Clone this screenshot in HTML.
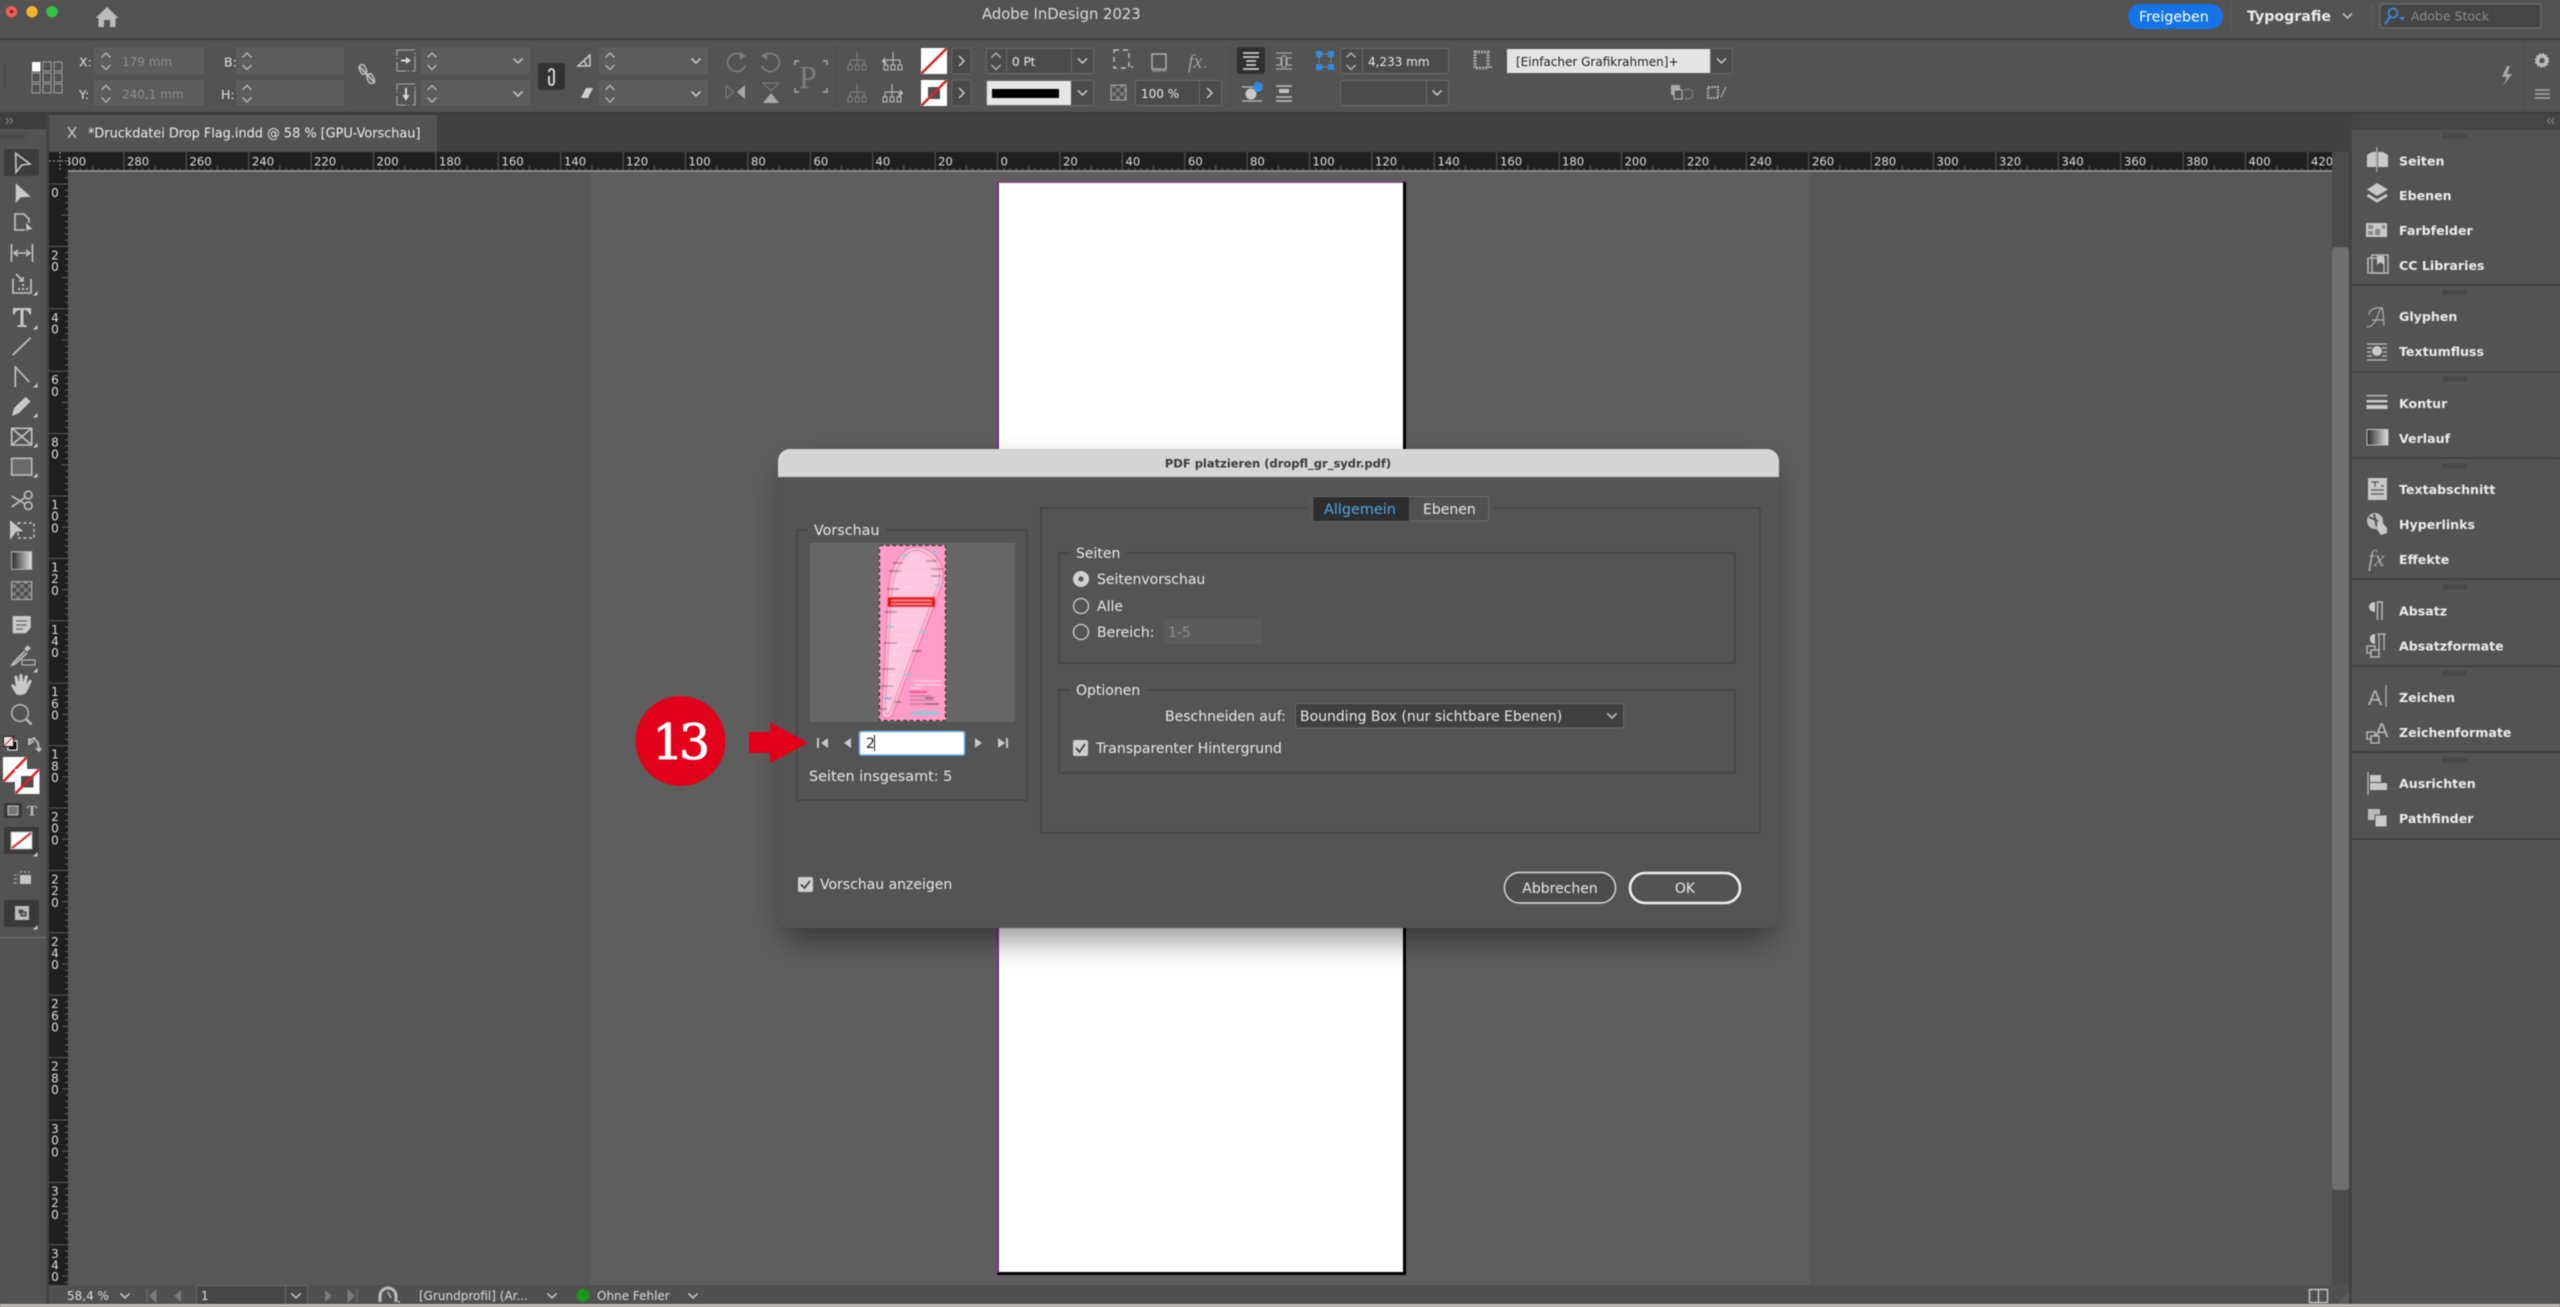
<!DOCTYPE html>
<html lang="de"><head><meta charset="utf-8"><title>Adobe InDesign 2023</title>
<style>
html,body{margin:0;padding:0;background:#535353;overflow:hidden}
svg{display:block;position:absolute;left:0;top:0}
svg.root{filter:blur(.4px)}
text{font-family:"DejaVu Sans","Liberation Sans",sans-serif;white-space:pre}
.t12{font-size:12px;fill:#e8e8e8}
.dis{font-size:12px;fill:#8d8d8d}
.lab{font-size:12.5px;fill:#e0e0e0}
.d{font-size:14px;fill:#e9e9e9}
.pn{font-size:12.6px;font-weight:bold;fill:#ececec}
.rh{font-size:11.6px;fill:#dedede}
.rv{font-size:12px;fill:#dedede;text-anchor:middle}
.st{font-size:12px;fill:#dcdcdc}
.ic{fill:none;stroke:#c4c4c4;stroke-width:1.6}
.icd{fill:none;stroke:#9c9c9c;stroke-width:1.4}
.f{fill:#c9c9c9}
.fd{fill:#8e8e8e}
.fld{fill:#5c5c5c}
.sp{fill:none;stroke:#b5b5b5;stroke-width:1.4}
.gb{fill:none;stroke:#484848;stroke-width:2}
</style></head>
<body>
<svg class="root" width="2560" height="1307" viewBox="0 0 2560 1307" xmlns="http://www.w3.org/2000/svg">
<defs>
<filter id="blur" x="-20%" y="-20%" width="140%" height="140%"><feGaussianBlur stdDeviation="15"/></filter>
<filter id="soft"><feGaussianBlur stdDeviation=".45"/></filter>
<linearGradient id="g1" x1="0" x2="1" y1="0" y2="0"><stop offset="0" stop-color="#2a2a2a"/><stop offset="1" stop-color="#e0e0e0"/></linearGradient>
<pattern id="rh" patternUnits="userSpaceOnUse" x="997" y="152" width="62.4" height="19">
<path d="M.5 0V19" stroke="#5a5a5a" stroke-width="1"/>
<path d="M6.74 16V19M12.98 16V19M19.22 16V19M25.46 16V19M31.7 13V19M37.94 16V19M44.18 16V19M50.42 16V19M56.66 16V19" stroke="#666" stroke-width="1"/>
</pattern>
<pattern id="rv" patternUnits="userSpaceOnUse" x="49" y="183.5" width="19" height="62.4">
<path d="M0 .5H19" stroke="#5a5a5a" stroke-width="1"/>
<path d="M16 6.74H19M16 12.98H19M16 19.22H19M16 25.46H19M13 31.7H19M16 37.94H19M16 44.18H19M16 50.42H19M16 56.66H19" stroke="#666" stroke-width="1"/>
</pattern>
<pattern id="chk" patternUnits="userSpaceOnUse" width="8" height="8"><rect width="8" height="8" fill="#7a7a7a"/><rect width="4" height="4" fill="#4c4c4c"/><rect x="4" y="4" width="4" height="4" fill="#4c4c4c"/></pattern>
<symbol id="spin" overflow="visible"><path class="sp" d="M-4.5 -3L0 -7.5L4.5 -3M-4.5 4.5L0 9L4.5 4.5"/></symbol>
<symbol id="chev" overflow="visible"><path fill="none" stroke="#c0c0c0" stroke-width="1.6" d="M-4.5 -2.5L0 2L4.5 -2.5"/></symbol>
<symbol id="grip" overflow="visible"><path d="M-12 0H12" stroke="#3f3f3f" stroke-width="5" stroke-dasharray="1.3 1.3"/></symbol>
<symbol id="cn" overflow="visible"><path d="M0 0L-4.5 4.5H0Z" fill="#c9c9c9"/></symbol>
</defs>

<!-- window base -->
<rect width="2560" height="1307" fill="#535353"/>
<rect y="38" width="2560" height="2" fill="#3d3d3d"/>
<rect y="112" width="2560" height="2" fill="#3b3b3b"/>
<rect y="114" width="2560" height="38" fill="#414141"/>

<!-- traffic lights -->
<circle cx="11.5" cy="11.7" r="5.7" fill="#ec5f5a"/><circle cx="11.5" cy="11.7" r="1.7" fill="#8c1c1a"/>
<circle cx="32" cy="11.7" r="5.7" fill="#f4b32e"/>
<circle cx="52" cy="11.7" r="5.7" fill="#2fc448"/>
<path d="M107 7L118.5 18H115.5V27H110V20H104V27H98.5V18H95.5Z" fill="#bcbcbc"/>

<text x="982" y="19" style="font-size:14.8px;fill:#dcdcdc">Adobe InDesign 2023</text>

<rect x="2128" y="4" width="95" height="25" rx="12.5" fill="#1473e6"/>
<text x="2139" y="21.5" style="font-size:14.2px;fill:#fff">Freigeben</text>
<rect x="2231" y="4" width="1" height="25" fill="#5e5e5e"/>
<text x="2247" y="21" style="font-size:14.2px;font-weight:bold;fill:#ececec">Typografie</text>
<use href="#chev" x="2347.5" y="16"/>
<rect x="2371" y="4" width="1" height="25" fill="#5e5e5e"/>
<rect x="2380" y="4" width="161" height="24" rx="3" fill="#454545" stroke="#686868" stroke-width="1.5"/>
<circle cx="2393" cy="13" r="4.5" fill="none" stroke="#3f8ee0" stroke-width="1.6"/>
<path d="M2390 17L2385 24" stroke="#3f8ee0" stroke-width="2"/><path d="M2399 17H2405L2402 20.5Z" fill="#3f8ee0"/>
<text x="2411" y="20.5" style="font-size:12.5px;fill:#8a8a8a">Adobe Stock</text>

<!-- control bar left -->
<path d="M5 65V88" stroke="#3f3f3f" stroke-width="2" stroke-dasharray="1.3 1.3"/>
<g fill="none" stroke="#a0a0a0" stroke-width="1">
<rect x="43" y="62" width="8" height="9"/><rect x="54" y="62" width="8" height="9"/>
<rect x="32" y="73" width="8" height="9"/><rect x="43" y="73" width="8" height="9"/><rect x="54" y="73" width="8" height="9"/>
<rect x="32" y="84" width="8" height="9"/><rect x="43" y="84" width="8" height="9"/><rect x="54" y="84" width="8" height="9"/>
</g>
<rect x="32" y="62" width="8.5" height="9.5" fill="#fff"/>

<text class="lab" x="79" y="66.5">X:</text><text class="lab" x="79" y="99">Y:</text>
<rect class="fld" x="94" y="48" width="110" height="26" rx="2"/><rect class="fld" x="94" y="80" width="110" height="26" rx="2"/>
<use href="#spin" x="106" y="60.5"/><use href="#spin" x="106" y="93"/>
<text class="dis" x="122" y="66">179 mm</text><text class="dis" x="122" y="98.5">240,1 mm</text>

<text class="lab" x="224" y="66.5">B:</text><text class="lab" x="221" y="99">H:</text>
<rect class="fld" x="236" y="48" width="108" height="26" rx="2"/><rect class="fld" x="236" y="80" width="108" height="26" rx="2"/>
<use href="#spin" x="247" y="60.5"/><use href="#spin" x="247" y="93"/>

<g fill="none" stroke="#c0c0c0" stroke-width="1.5"><rect x="-3" y="-10" width="6" height="10" rx="3" transform="translate(365 74) rotate(-25)"/><rect x="-3" y="-1" width="6" height="10" rx="3" transform="translate(369 75) rotate(-25)"/><path d="M360 67L375 83" stroke-width="1.8"/></g>

<rect x="397" y="50" width="18" height="21" fill="none" stroke="#a8a8a8" stroke-width="1.1" stroke-dasharray="18 3 1.5 1.5"/>
<path d="M401 60.5H407" stroke="#d8d8d8" stroke-width="2"/><path d="M406 57L411 60.5L406 64Z" fill="#d8d8d8"/>
<rect x="397" y="84" width="18" height="21" fill="none" stroke="#a8a8a8" stroke-width="1.1" stroke-dasharray="18 3 1.5 1.5"/>
<path d="M406 88V96" stroke="#d8d8d8" stroke-width="2"/><path d="M402.500 95L406 101L409.500 95Z" fill="#d8d8d8"/>
<rect class="fld" x="421" y="48" width="109" height="26" rx="2"/><rect class="fld" x="421" y="80" width="109" height="26" rx="2"/>
<use href="#spin" x="432" y="60.5"/><use href="#spin" x="432" y="93"/>
<use href="#chev" x="518" y="61"/><use href="#chev" x="518" y="94"/>

<rect x="538" y="63" width="27" height="27" rx="3" fill="#333"/>
<path d="M549 72C549 68 554 68 554 72V82M554 76V82C554 86 549 86 549 82V76" fill="none" stroke="#e4e4e4" stroke-width="1.8"/>

<path class="ic" d="M578 66L590 55V66ZM584 60L587 66"/>
<path d="M581 98L586 88H593L588 98Z" fill="#d0d0d0"/>
<rect class="fld" x="599" y="48" width="109" height="26" rx="2"/><rect class="fld" x="599" y="80" width="109" height="26" rx="2"/>
<use href="#spin" x="610" y="60.5"/><use href="#spin" x="610" y="93"/>
<use href="#chev" x="696" y="61"/><use href="#chev" x="696" y="94"/>

<!-- rotate / flip -->
<g fill="none" stroke="#7c7c7c" stroke-width="1.8">
<path d="M743 56A9 9 0 1 0 745 66" /><path d="M764 56A9 9 0 1 1 762 66"/>
</g>
<path d="M740 52L746 56L740 60ZM767 52L761 56L767 60Z" fill="#7c7c7c"/>
<path d="M726 86L734 92L726 98Z" fill="none" stroke="#808080"/><path d="M745 85V99L737 92Z" fill="#a8a8a8"/>
<path d="M763 83H779L771 91Z" fill="none" stroke="#808080"/><path d="M763 103H779L771 93Z" fill="#a8a8a8"/>
<text x="799" y="88" style="font-family:'Liberation Serif',serif;font-size:32px;fill:#7e7e7e">P</text>
<path d="M795 65V61H799M823 61H827V65M795 88V92H799M823 92H827V88" fill="none" stroke="#a8a8a8" stroke-width="1.4"/>
<rect x="836" y="46" width="1" height="62" fill="#4d4d4d"/>

<!-- align tree icons -->
<g fill="none" stroke="#808080" stroke-width="1"><path d="M857 52V60M850 60H864M850 60V65M857 60V65M864 60V65M848 65h4v5h-4zM855 65h4v5h-4zM862 65h4v5h-4z"/><path d="M857 84V92M850 92H864M850 92V97M857 92V97M864 92V97M848 97h4v5h-4zM855 97h4v5h-4zM862 97h4v5h-4z"/></g>
<g fill="none" stroke="#c0c0c0" stroke-width="1"><path d="M893 52V60M886 60H900M886 60V65M893 60V65M900 60V65M884 65h4v5h-4zM891 65h4v5h-4zM898 65h4v5h-4z"/><path d="M892 84V92M885 92H899M885 92V97M892 92V97M899 92V97M883 97h4v5h-4zM890 97h4v5h-4zM897 97h4v5h-4z"/></g>
<path d="M882 61L885 57V65ZM903 93L900 89V97Z" fill="#c8c8c8"/>

<!-- swatches -->
<rect x="921" y="48" width="26" height="26" fill="#fff"/><path d="M921.5 73.5L946.5 48.5" stroke="#d9242a" stroke-width="2.5"/>
<rect x="952" y="48" width="19" height="26" rx="2" fill="#4a4a4a" stroke="#636363"/><path d="M959 56L964 61L959 66" fill="none" stroke="#d0d0d0" stroke-width="1.4"/>
<rect x="921" y="80" width="26" height="26" fill="#fff"/><rect x="928" y="87" width="12" height="12" fill="#4e4e4e"/><path d="M921.5 105.5L946.5 80.5" stroke="#d9242a" stroke-width="2.5"/>
<rect x="952" y="80" width="19" height="26" rx="2" fill="#4a4a4a" stroke="#636363"/><path d="M959 88L964 93L959 98" fill="none" stroke="#d0d0d0" stroke-width="1.4"/>

<rect x="986.5" y="48.5" width="107" height="25" rx="2" fill="#4b4b4b" stroke="#686868"/>
<use href="#spin" x="996" y="60.5"/><rect x="1006" y="49" width="1" height="24" fill="#686868"/>
<rect x="1071" y="49" width="1" height="24" fill="#686868"/>
<text class="t12" x="1012" y="66">0 Pt</text><use href="#chev" x="1082.5" y="61"/>
<rect x="986.5" y="80.5" width="107" height="25" rx="2" fill="#4b4b4b" stroke="#686868"/>
<rect x="987" y="81" width="84" height="24" fill="#e6e6e6"/><rect x="992" y="89" width="67" height="9" fill="#000"/>
<use href="#chev" x="1082.5" y="93"/>

<rect x="1114" y="50" width="15" height="18" fill="none" stroke="#c0c0c0" stroke-width="1.4" stroke-dasharray="5 4"/>
<circle cx="1132" cy="67" r="1" fill="#c0c0c0"/>
<rect x="1152" y="54" width="14" height="15" fill="none" stroke="#b8b8b8" stroke-width="1.3"/><rect x="1152" y="69" width="14" height="2.5" fill="#8a8a8a"/>
<text x="1188" y="68" style="font-family:'Liberation Serif',serif;font-style:italic;font-size:20px;fill:#9e9e9e">fx</text><circle cx="1205" cy="67" r="1" fill="#9e9e9e"/>

<rect x="1111" y="85" width="15" height="15" fill="url(#chk)" stroke="#aaa"/>
<rect x="1135.5" y="80.5" width="86" height="25" rx="2" fill="#4b4b4b" stroke="#686868"/><rect x="1199" y="81" width="1" height="24" fill="#686868"/>
<text class="t12" x="1141" y="98">100 %</text><path d="M1207 88L1212 93L1207 98" fill="none" stroke="#d0d0d0" stroke-width="1.4"/>
<rect x="1229" y="46" width="1" height="62" fill="#4d4d4d"/>

<rect x="1237" y="47" width="28" height="27" rx="3" fill="#303030"/>
<path d="M1243 53H1259M1243 57H1259M1246 61H1256M1246 65H1256M1243 69H1259" stroke="#e0e0e0" stroke-width="1.6"/>
<path d="M1276 53H1292M1276 69H1292M1276 58H1281V65H1276M1292 58H1287V65H1292" stroke="#a8a8a8" stroke-width="1.3" fill="none"/><rect x="1282" y="56" width="4" height="11" fill="none" stroke="#a8a8a8"/>
<path d="M1242 87H1262M1242 101H1262" stroke="#b0b0b0" stroke-width="1.4"/><circle cx="1251" cy="94" r="5.5" fill="#c8c8c8"/><circle cx="1258" cy="87" r="5" fill="#2f8ae6"/>
<path d="M1276 86H1292M1276 101H1292M1276 97H1292" stroke="#c0c0c0" stroke-width="1.6"/><rect x="1279" y="89" width="10" height="4" fill="#c0c0c0"/>

<g fill="#2f8ae6"><rect x="1316" y="51" width="6" height="6"/><rect x="1328" y="51" width="6" height="6"/><rect x="1316" y="64" width="6" height="6"/><rect x="1328" y="64" width="6" height="6"/></g>
<path d="M1322 54H1328M1322 67H1328M1319 57V64M1331 57V64" stroke="#a0a0a0" stroke-dasharray="2 1.5"/>
<rect x="1340.5" y="48.5" width="108" height="25" rx="2" fill="#4b4b4b" stroke="#686868"/>
<use href="#spin" x="1351" y="60.5"/><rect x="1362" y="49" width="1" height="24" fill="#686868"/>
<text class="t12" x="1368" y="66">4,233 mm</text>
<rect x="1340.5" y="80.5" width="108" height="25" rx="2" fill="#4b4b4b" stroke="#686868"/><rect x="1426" y="81" width="1" height="24" fill="#686868"/>
<use href="#chev" x="1437" y="93"/>

<rect x="1475" y="52" width="13" height="16" fill="none" stroke="#a8a8a8" stroke-width="3" stroke-dasharray="2 1"/><circle cx="1491" cy="67" r="1" fill="#c0c0c0"/>
<rect x="1507" y="49" width="203" height="24" fill="#e4e4e4"/>
<text x="1516" y="66" style="font-size:12px;fill:#222">[Einfacher Grafikrahmen]+</text>
<rect x="1710.5" y="48.5" width="22" height="25" rx="2" fill="#4b4b4b" stroke="#686868"/><use href="#chev" x="1721.5" y="61"/>
<rect x="1671" y="85" width="9" height="10" fill="#aaa"/><rect x="1674" y="90" width="8" height="9" fill="#555" stroke="#bbb"/><path d="M1685 90A5 5 0 1 1 1685 98" fill="none" stroke="#808080" stroke-width="1.2"/>
<rect x="1708" y="87" width="10" height="11" fill="none" stroke="#b0b0b0" stroke-width="2" stroke-dasharray="2 1"/><path d="M1726 87L1721 97" stroke="#bbb"/>
<path d="M2507 66L2502 77H2507L2503 86L2512 74H2507L2510 66Z" fill="#a8a8a8"/>
<rect x="2523" y="40" width="1" height="72" fill="#4d4d4d"/>
<circle cx="2542" cy="60.5" r="4.5" fill="none" stroke="#bcbcbc" stroke-width="3.5"/><circle cx="2542" cy="60.5" r="6.5" fill="none" stroke="#bcbcbc" stroke-width="1.5" stroke-dasharray="2 1.4"/>
<path d="M2535 90H2550M2535 94H2550M2535 98H2550" stroke="#a8a8a8" stroke-width="1.5"/>

<!-- tab row -->
<rect x="0" y="114" width="46" height="15" fill="#3e3e3e"/>
<path d="M6 118L8.5 121L6 124M10 118L12.5 121L10 124" fill="none" stroke="#8a8a8a"/>
<rect x="49" y="115" width="388" height="37" fill="#535353"/>
<path d="M68 127L76 138M76 127L68 138" stroke="#d0d0d0" stroke-width="1.2"/>
<text x="88" y="137.500" style="font-size:12.85px;fill:#ededed">*Druckdatei Drop Flag.indd @ 58 % [GPU-Vorschau]</text>

<!-- canvas -->
<rect x="49" y="152" width="2303" height="1152" fill="#575757"/>
<rect x="590" y="172" width="1220" height="1113" fill="#5e5e5e"/>

<!-- page -->
<rect x="997" y="182" width="409" height="1093" fill="#000"/>
<rect x="997" y="182" width="406" height="1" fill="#a040a0"/>
<rect x="997" y="182" width="2" height="1091" fill="#7a2a8a"/>
<rect x="999" y="183" width="404" height="1089" fill="#fff"/>

<!-- rulers -->
<rect x="49" y="152" width="2283" height="19" fill="#1f1f1f"/>
<rect x="49" y="152" width="2283" height="19" fill="url(#rh)"/>
<rect x="49" y="170" width="2283" height="2" fill="#8a8a8a"/>
<rect x="49" y="172" width="19" height="1113" fill="#1f1f1f"/>
<rect x="49" y="172" width="19" height="1113" fill="url(#rv)"/>
<rect x="49" y="152" width="19" height="20" fill="#1f1f1f"/>
<path d="M49 161H68M60 152V171" stroke="#9a9a9a" stroke-dasharray="2 2"/>
<svg x="68" y="152" width="2264" height="19" viewBox="68 152 2264 19" style="position:static">
<g class="rh">
<text class="rh" x="64" y="165.5">300</text><text class="rh" x="127" y="165.5">280</text><text class="rh" x="189.5" y="165.5">260</text><text class="rh" x="252" y="165.5">240</text><text class="rh" x="314" y="165.5">220</text><text class="rh" x="376.5" y="165.5">200</text><text class="rh" x="439" y="165.5">180</text><text class="rh" x="501.5" y="165.5">160</text><text class="rh" x="564" y="165.5">140</text><text class="rh" x="626" y="165.5">120</text><text class="rh" x="688.5" y="165.5">100</text>
<text class="rh" x="751" y="165.5">80</text><text class="rh" x="813.5" y="165.5">60</text><text class="rh" x="875.5" y="165.5">40</text><text class="rh" x="938" y="165.5">20</text><text class="rh" x="1000.5" y="165.5">0</text><text class="rh" x="1063" y="165.5">20</text><text class="rh" x="1125.5" y="165.5">40</text><text class="rh" x="1188" y="165.5">60</text><text class="rh" x="1250" y="165.5">80</text>
<text class="rh" x="1312.5" y="165.5">100</text><text class="rh" x="1375" y="165.5">120</text><text class="rh" x="1437.5" y="165.5">140</text><text class="rh" x="1500" y="165.5">160</text><text class="rh" x="1562" y="165.5">180</text><text class="rh" x="1624.5" y="165.5">200</text><text class="rh" x="1687" y="165.5">220</text><text class="rh" x="1749.5" y="165.5">240</text><text class="rh" x="1812" y="165.5">260</text><text class="rh" x="1874" y="165.5">280</text><text class="rh" x="1936.5" y="165.5">300</text><text class="rh" x="1999" y="165.5">320</text><text class="rh" x="2061.5" y="165.5">340</text><text class="rh" x="2124" y="165.5">360</text><text class="rh" x="2186" y="165.5">380</text><text class="rh" x="2248.5" y="165.5">400</text><text class="rh" x="2311" y="165.5">420</text>
</g></svg>
<text class="rv" y="197"><tspan x="55">0</tspan></text>
<text class="rv" y="259.4"><tspan x="55">2</tspan><tspan x="55" dy="11.7">0</tspan></text>
<text class="rv" y="321.8"><tspan x="55">4</tspan><tspan x="55" dy="11.7">0</tspan></text>
<text class="rv" y="384.2"><tspan x="55">6</tspan><tspan x="55" dy="11.7">0</tspan></text>
<text class="rv" y="446.6"><tspan x="55">8</tspan><tspan x="55" dy="11.7">0</tspan></text>
<text class="rv" y="509"><tspan x="55">1</tspan><tspan x="55" dy="11.7">0</tspan><tspan x="55" dy="11.7">0</tspan></text>
<text class="rv" y="571.4"><tspan x="55">1</tspan><tspan x="55" dy="11.7">2</tspan><tspan x="55" dy="11.7">0</tspan></text>
<text class="rv" y="633.8"><tspan x="55">1</tspan><tspan x="55" dy="11.7">4</tspan><tspan x="55" dy="11.7">0</tspan></text>
<text class="rv" y="696.2"><tspan x="55">1</tspan><tspan x="55" dy="11.7">6</tspan><tspan x="55" dy="11.7">0</tspan></text>
<text class="rv" y="758.6"><tspan x="55">1</tspan><tspan x="55" dy="11.7">8</tspan><tspan x="55" dy="11.7">0</tspan></text>
<text class="rv" y="821"><tspan x="55">2</tspan><tspan x="55" dy="11.7">0</tspan><tspan x="55" dy="11.7">0</tspan></text>
<text class="rv" y="883.4"><tspan x="55">2</tspan><tspan x="55" dy="11.7">2</tspan><tspan x="55" dy="11.7">0</tspan></text>
<text class="rv" y="945.8"><tspan x="55">2</tspan><tspan x="55" dy="11.7">4</tspan><tspan x="55" dy="11.7">0</tspan></text>
<text class="rv" y="1008.2"><tspan x="55">2</tspan><tspan x="55" dy="11.7">6</tspan><tspan x="55" dy="11.7">0</tspan></text>
<text class="rv" y="1070.6"><tspan x="55">2</tspan><tspan x="55" dy="11.7">8</tspan><tspan x="55" dy="11.7">0</tspan></text>
<text class="rv" y="1133"><tspan x="55">3</tspan><tspan x="55" dy="11.7">0</tspan><tspan x="55" dy="11.7">0</tspan></text>
<text class="rv" y="1195.4"><tspan x="55">3</tspan><tspan x="55" dy="11.7">2</tspan><tspan x="55" dy="11.7">0</tspan></text>
<text class="rv" y="1257.8"><tspan x="55">3</tspan><tspan x="55" dy="11.7">4</tspan><tspan x="55" dy="11.7">0</tspan></text>

<!-- scrollbar -->
<rect x="2332" y="152" width="20" height="1133" fill="#4b4b4b"/>
<rect x="2332" y="247" width="17" height="943" rx="4" fill="#6f6f6f"/>

<!-- status bar -->
<rect x="46" y="1285" width="2306" height="19" fill="#505050"/>
<text class="st" x="67" y="1300">58,4 %</text><use href="#chev" x="125" y="1296"/>
<path d="M147 1290V1302M156 1290L150 1296L156 1302Z" stroke="#7a7a7a" fill="#7a7a7a"/>
<path d="M181 1290L174 1296L181 1302Z" fill="#7a7a7a"/>
<rect x="196.5" y="1285.5" width="111" height="19" rx="2" fill="#474747" stroke="#6a6a6a"/><rect x="285" y="1286" width="1" height="18" fill="#6a6a6a"/>
<text class="st" x="201" y="1300">1</text><use href="#chev" x="296" y="1296"/>
<path d="M325 1290L332 1296L325 1302Z" fill="#7a7a7a"/><path d="M348 1290L354 1296L348 1302ZM357 1290V1302" stroke="#7a7a7a" fill="#7a7a7a"/>
<path d="M380 1302V1296A8 8 0 0 1 396 1296V1302" fill="none" stroke="#bbb" stroke-width="3"/><path d="M388 1292L391 1298" stroke="#bbb" stroke-width="1.5"/><circle cx="399" cy="1302" r="1" fill="#bbb"/>
<text class="st" x="419" y="1300">[Grundprofil] (Ar...</text><use href="#chev" x="552" y="1296"/>
<circle cx="583" cy="1295.5" r="6.5" fill="#1a961a"/>
<text class="st" x="597" y="1300">Ohne Fehler</text><use href="#chev" x="693" y="1296"/>
<rect x="2309.5" y="1289.5" width="18" height="13" fill="none" stroke="#c8c8c8" stroke-width="1.4"/><path d="M2318.5 1289V1303" stroke="#c8c8c8" stroke-width="1.4"/>
<path d="M2338 1303L2349 1292V1303Z" fill="#5c5c5c"/>
<rect y="1304" width="2560" height="3" fill="#c8bdbd"/>

<!-- left toolbar -->
<rect x="0" y="129" width="46" height="1175" fill="#535353"/>
<rect x="46" y="114" width="3" height="1190" fill="#444"/>
<use href="#grip" x="13" y="136"/>
<rect x="4" y="149" width="35" height="27" rx="2" fill="#3d3d3d"/>
<path class="ic" d="M15.7 153.3L30 164L21.7 165L16 172.3Z"/>
<path class="f" d="M15.7 183.3L30.7 196.7L20.7 197.3L15.7 203.3Z"/>
<path class="ic" d="M25 230H15V214H24L29 219V223"/><path class="f" d="M26 223L32.5 229L28.3 229.5L26.7 232Z"/>
<path class="ic" d="M11.5 244V262M32.5 244V262M14 253H30M18 250L14 253L18 256M26 250L30 253L26 256" stroke-width="2"/>
<path class="ic" d="M13 279V293H31V279" stroke-width="2"/><path class="ic" d="M16 274L23 281M23 277V281H19"/><path d="M18 288h2v2h-2zM22 288h2v2h-2zM26 288h2v2h-2zM22 284h2v2h-2z" fill="#c4c4c4"/><use href="#cn" x="37.5" y="291"/>
<path class="f" d="M13 308H31V314.500H29.500C28.500 311 27 310 23.500 310V325H26.500V327H17.500V325H20.500V310C17 310 15.500 311 14.500 314.500H13Z"/><use href="#cn" x="37.5" y="325"/>
<path class="ic" d="M12.7 355L30.7 337.7"/>
<path class="ic" d="M15.3 387V367L29.3 382"/><use href="#cn" x="37.5" y="383"/>
<path class="f" d="M12 416L14 408L26 396.5L31 401L19 413Z"/><path d="M26 396.5L31 401" stroke="#535353"/><use href="#cn" x="37.5" y="413"/>
<path class="ic" d="M11.7 428.3H31.7V445H11.7ZM11.7 428.3L31.7 445M31.7 428.3L11.7 445" /><use href="#cn" x="37.5" y="443"/>
<rect x="11.7" y="458.3" width="20" height="16.7" fill="#6a6a6a" stroke="#bcbcbc" stroke-width="1.6"/><use href="#cn" x="37.5" y="473"/>
<circle class="ic" cx="28.3" cy="495" r="3.8"/><circle class="ic" cx="28.3" cy="505.7" r="3.8"/><path class="ic" d="M11.7 496L25 504M11.7 507L25 497.5" stroke-width="2"/>
<rect x="18" y="523" width="16" height="15" fill="none" stroke="#c4c4c4" stroke-width="1.5" stroke-dasharray="3 2.5"/><path class="f" d="M10 520L23 531L16 532L10 540Z"/>
<rect x="11.7" y="551.7" width="20" height="17.6" fill="url(#g1)" stroke="#bcbcbc"/>
<rect x="11.7" y="581.7" width="20" height="17.6" fill="url(#chk)" stroke="#bcbcbc"/>
<path class="f" d="M12.7 616H30.7V628L26 633.3H12.7Z"/><path d="M16 621H27M16 625H27M16 629H23" stroke="#666" stroke-width="1.3"/>
<path d="M26 647L29 650" stroke="#c4c4c4" stroke-width="5"/><path class="ic" d="M25 651L14 662L12 665L15 664L27 653"/><rect x="22" y="660" width="13" height="5" fill="none" stroke="#c4c4c4"/><use href="#cn" x="37.5" y="668"/>
<path class="f" d="M16 694C13 689 11 686 11.5 684.5C13 683.5 15 686 16 687L14.5 677C15 675 17 675 17.5 677L19 682L19.5 675C20 673.5 22 673.5 22.5 675L23 682L25 676C26 674.5 28 675 27.8 677L26.5 684L29.5 680C31 679 32 680 31.5 682C30 685 28 690 26 693C24 695 18 696 16 694Z"/>
<circle cx="20" cy="713" r="8.3" fill="none" stroke="#b8b8b8" stroke-width="1.5"/><path d="M26 719L31.5 724.5" stroke="#b8b8b8" stroke-width="2.6"/>
<rect x="8" y="741" width="9" height="9" fill="#111" stroke="#fff"/><rect x="3.5" y="736.5" width="10" height="10" fill="#e8e8e8" stroke="#222"/><path d="M4 746L13 737" stroke="#d9242a"/>
<path d="M29 741L34 738L38 743L39 750M36 748L39 751L41 748M29 738V744L34 741" fill="none" stroke="#c4c4c4" stroke-width="1.7"/>
<rect x="3" y="757" width="24" height="25" fill="#fff"/><path d="M3.5 781.5L26.5 757.5" stroke="#dc1f26" stroke-width="2.5"/>
<rect x="15" y="769" width="24.5" height="25" fill="#fff"/><rect x="21" y="776" width="12.5" height="11.5" fill="#4d4d4d"/><path d="M15.5 793.5L39 769.5" stroke="#dc1f26" stroke-width="2.5"/>
<rect x="4" y="803" width="18" height="15" rx="2" fill="#3a3a3a"/><rect x="8" y="806" width="10" height="9" fill="#767676" stroke="#c0c0c0"/>
<text x="27" y="815.5" style="font-family:'Liberation Serif',serif;font-weight:bold;font-size:15px;fill:#c0c0c0">T</text>
<rect x="4" y="827" width="35" height="27" rx="2" fill="#3a3a3a"/><rect x="11" y="832" width="21" height="17" fill="#fff" stroke="#b0b0b0"/><path d="M12 848L31 833" stroke="#dc1f26" stroke-width="2"/><use href="#cn" x="37.5" y="852"/>
<rect x="20" y="875" width="11" height="9" fill="#c8c8c8"/><path d="M21 873V870M25 873V870M29 873V870M14 875H18M14 879H18M14 883H18" stroke="#b0b0b0" stroke-width="1.3" stroke-dasharray="2 1"/>
<rect x="4" y="900" width="35" height="27" rx="2" fill="#3a3a3a"/><rect x="15" y="906" width="14" height="14" fill="#bcbcbc"/><rect x="18" y="909" width="6" height="5" fill="#555" stroke="#bcbcbc"/><rect x="21" y="912" width="5" height="4" fill="#888" stroke="#333"/><use href="#cn" x="37.5" y="925"/>
<rect x="0" y="937" width="46" height="1" fill="#737373"/>

<!-- right panel -->
<rect x="2349" y="114" width="3" height="1190" fill="#424242"/>
<rect x="2352" y="130" width="208" height="1174" fill="#535353"/>
<rect x="2352" y="114" width="208" height="16" fill="#454545"/>
<path d="M2550 118L2547.5 121L2550 124M2554 118L2551.5 121L2554 124" fill="none" stroke="#8a8a8a"/>
<g fill="#424242"><rect x="2352" y="284" width="208" height="2"/><rect x="2352" y="371" width="208" height="2"/><rect x="2352" y="457" width="208" height="2"/><rect x="2352" y="578" width="208" height="2"/><rect x="2352" y="665" width="208" height="2"/><rect x="2352" y="751" width="208" height="2"/><rect x="2352" y="838" width="208" height="2"/></g>
<use href="#grip" x="2455" y="136"/><use href="#grip" x="2455" y="292.5"/><use href="#grip" x="2455" y="379"/><use href="#grip" x="2455" y="466"/><use href="#grip" x="2455" y="587"/><use href="#grip" x="2455" y="673"/><use href="#grip" x="2455" y="760"/>

<text class="pn" x="2399" y="165.5">Seiten</text>
<text class="pn" x="2399" y="200">Ebenen</text>
<text class="pn" x="2399" y="235">Farbfelder</text>
<text class="pn" x="2399" y="270">CC Libraries</text>
<text class="pn" x="2399" y="321">Glyphen</text>
<text class="pn" x="2399" y="356">Textumfluss</text>
<text class="pn" x="2399" y="408">Kontur</text>
<text class="pn" x="2399" y="443">Verlauf</text>
<text class="pn" x="2399" y="494">Textabschnitt</text>
<text class="pn" x="2399" y="529">Hyperlinks</text>
<text class="pn" x="2399" y="564">Effekte</text>
<text class="pn" x="2399" y="615.5">Absatz</text>
<text class="pn" x="2399" y="650.5">Absatzformate</text>
<text class="pn" x="2399" y="702">Zeichen</text>
<text class="pn" x="2399" y="737">Zeichenformate</text>
<text class="pn" x="2399" y="788">Ausrichten</text>
<text class="pn" x="2399" y="823">Pathfinder</text>

<path class="f" d="M2367 155L2372 152H2376V167H2367ZM2378 152H2383L2388 155V167H2378Z"/><path d="M2376.8 147V172" stroke="#c9c9c9"/>
<path class="f" d="M2377 183L2388 189.5L2377 196L2367 189.5Z"/><path d="M2367.5 195L2377 201L2387 195" fill="none" stroke="#c9c9c9" stroke-width="3"/>
<rect x="2366" y="223" width="21" height="14" fill="#c9c9c9"/><path d="M2368 225h5v4h-5zM2375 229h5v6h-5zM2368 231h5v4h-5zM2382 225h3v4h-3z" fill="#8a8a8a"/>
<path d="M2372 255H2388V273H2372ZM2368 258V271" fill="none" stroke="#b8b8b8" stroke-width="1.5"/><rect x="2368" y="258" width="16" height="15" fill="none" stroke="#b8b8b8" stroke-width="1.3"/><path d="M2377 256H2384V265L2380.5 262L2377 265Z" fill="#c9c9c9"/>
<path d="M2367 327C2372 327 2376 322 2379 312C2381 307 2383 308 2383 312L2384 326M2372 320H2384M2369 315C2369 309 2376 307 2383 308" fill="none" stroke="#b0b0b0" stroke-width="1.2"/>
<circle cx="2377" cy="351" r="5" fill="#c9c9c9"/><path d="M2367 344H2387M2367 348H2372M2382 348H2387M2367 352H2371M2383 352H2387M2367 356H2372M2382 356H2387M2367 360H2387" stroke="#c0c0c0" stroke-width="1.3"/>
<rect x="2366.5" y="395" width="21" height="1.3" fill="#c9c9c9"/><rect x="2366.5" y="400" width="21" height="2.5" fill="#c9c9c9"/><rect x="2366.5" y="405" width="21" height="4" fill="#c9c9c9"/>
<rect x="2367" y="429.5" width="21" height="15.5" fill="url(#g1)" stroke="#c0c0c0"/>
<rect x="2368" y="478" width="19" height="22" fill="#c9c9c9"/><path d="M2371 482H2379M2375 482V487M2381 486H2384M2371 490H2384M2371 494H2384" stroke="#555" stroke-width="1.3"/>
<circle cx="2375" cy="521" r="8" fill="#c0c0c0"/><path d="M2369 517L2378 521M2374 514L2377 528" stroke="#535353" stroke-width="2"/><path class="f" d="M2378 523L2381 521L2387 528V533L2381 535L2376 528Z"/>
<text x="2368" y="566" style="font-family:'Liberation Serif',serif;font-style:italic;font-size:23px;fill:#a8a8a8">fx</text>
<path class="f" d="M2375 602V612C2371 612 2369 609 2369 607C2369 604 2372 602 2375 602Z"/><path d="M2377 602H2383M2377.5 602V620M2382 602V620" stroke="#b8b8b8" stroke-width="1.5"/>
<path class="f" d="M2375 634V644C2372 644 2370 642 2370 639C2370 636 2372 634 2375 634Z"/><path d="M2377 634H2386M2379 634V650M2384 634V650" stroke="#b8b8b8" stroke-width="1.3"/>
<rect x="2367" y="646" width="8" height="7" fill="#535353" stroke="#c0c0c0" stroke-width="1.3"/><rect x="2371" y="650" width="8" height="7" fill="#535353" stroke="#c0c0c0" stroke-width="1.3"/>
<text x="2368" y="705" style="font-family:'Liberation Sans',sans-serif;font-size:21px;fill:#b8b8b8">A</text><path d="M2386 685V707" stroke="#b0b0b0" stroke-width="1.3"/>
<text x="2375" y="737" style="font-family:'Liberation Sans',sans-serif;font-size:20px;fill:#b8b8b8">A</text>
<rect x="2367" y="732" width="8" height="7" fill="#535353" stroke="#c0c0c0" stroke-width="1.3"/><rect x="2371" y="736" width="8" height="7" fill="#535353" stroke="#c0c0c0" stroke-width="1.3"/>
<path d="M2368 772V795" stroke="#b8b8b8" stroke-width="1.3"/><rect x="2370" y="775" width="11" height="7" fill="#c9c9c9"/><rect x="2370" y="783" width="17" height="7" fill="#c9c9c9"/>
<rect x="2368" y="809" width="12" height="11" fill="#bcbcbc"/><rect x="2375" y="815" width="12" height="12" fill="#c9c9c9" stroke="#535353"/>

<!-- dialog shadow and body -->
<rect x="784" y="466" width="989" height="474" rx="14" fill="#000" opacity=".42" filter="url(#blur)"/>
<rect x="778" y="449" width="1001" height="479" rx="12" fill="#545454"/>
<path d="M778 477V461A12 12 0 0 1 790 449H1767A12 12 0 0 1 1779 461V477Z" fill="#d6d5d6"/>
<text x="1278" y="467.5" text-anchor="middle" style="font-size:11.5px;font-weight:bold;fill:#3a3a3a">PDF platzieren (dropfl_gr_sydr.pdf)</text>

<!-- Vorschau box -->
<rect class="gb" x="797" y="530" width="230" height="270"/>
<rect x="808" y="520" width="78" height="20" fill="#545454"/>
<text class="d" x="814" y="535" style="font-size:14.3px">Vorschau</text>
<rect x="810" y="543" width="205" height="179" fill="#666"/>

<!-- thumbnail -->
<g transform="translate(879 545)">
<rect width="67" height="176" fill="#ff9cc8"/>
<g filter="url(#soft)">
<path d="M8 173C5 173 3 172 3 168L9 55C10 35 13 18 26 6C32 1 42 1 50 6C58 11 64 20 64 30C64 36 62 42 60 47L13 170C12 173 10 173 8 173Z" fill="#ffc7df" stroke="#e8457c" stroke-width=".8"/>
<path d="M9 169C7 169 6 168 6 166L12 55C13 38 16 21 28 9C33 4 42 4 48 9C55 13 61 22 61 30C61 36 59 41 57 46L11 167Z" fill="none" stroke="#e8457c" stroke-width=".7"/>
<path d="M15 30H52M13 42H52M12 70H42M12 80H38M11 90H34M10 100H31M9 110H27M8 120H23M7 130H20M7 140H16" stroke="#fff" stroke-width=".6" opacity=".45"/>
<rect x="9" y="52" width="47" height="10" fill="#e60000"/>
<path d="M12 55.500H53M12 59H53" stroke="#ffb8b8" stroke-width="1"/>
<g stroke="#3a2a30" stroke-width=".8"><path d="M14 18H24M10 26H22M8 44H20M6 67H18M5 98H18M3 124H16M2 141H14M6 153H13M1 164H8M47 16H58M52 24H64M52 31H62M33 106H42M15 157H22"/></g>
<g fill="#8fc6dc"><rect x="22" y="9" width="7" height="2"/><rect x="52" y="6" width="7" height="2"/><rect x="56" y="39" width="7" height="2"/><rect x="40" y="86" width="7" height="2"/><rect x="8" y="81" width="7" height="2"/><rect x="26" y="129" width="7" height="2"/><rect x="5" y="153" width="7" height="2"/><ellipse cx="46" cy="168" rx="16" ry="2"/></g>
<path d="M33 136H62M35 140H62" stroke="#fff" stroke-width=".8"/>
<path d="M31 143H42" stroke="#fff" stroke-width="1"/><path d="M31 147H48" stroke="#e62a62" stroke-width="1.2"/>
<path d="M31 151H52M31 155H54M31 159H58" stroke="#8a5a6a" stroke-width=".7"/><path d="M46 153H55M46 159H60" stroke="#333" stroke-width=".8"/>
</g>
<rect x=".5" y=".5" width="66" height="175" fill="none" stroke="#3a3a3a" stroke-width="1.3" stroke-dasharray="4 2.5"/>
</g>

<!-- nav -->
<path d="M818 738V748" stroke="#c8c8c8" stroke-width="2"/><path d="M828 738L821 743L828 748Z" fill="#c8c8c8"/>
<path d="M851 738L844 743L851 748Z" fill="#c8c8c8"/>
<rect x="859.5" y="731.5" width="105" height="23.5" rx="2" fill="#fff" stroke="#6bb2ea" stroke-width="1.5"/>
<text x="866" y="748" style="font-size:14px;fill:#222">2</text><path d="M874.5 735V751" stroke="#222"/>
<path d="M975 738L982 743L975 748Z" fill="#c8c8c8"/>
<path d="M998 738L1005 743L998 748Z" fill="#c8c8c8"/><path d="M1007 738V748" stroke="#c8c8c8" stroke-width="2"/>
<text class="d" x="809" y="781" style="font-size:14.4px">Seiten insgesamt: 5</text>

<!-- main box -->
<rect class="gb" x="1041" y="508" width="719" height="325"/>
<rect x="1307" y="500" width="186" height="16" fill="#545454"/>
<rect x="1312.5" y="496.5" width="176" height="24.5" rx="2" fill="#515151" stroke="#6a6a6a"/>
<rect x="1313" y="497" width="96" height="24" rx="1" fill="#2e2e2e"/>
<text x="1324" y="514" style="font-size:14.4px;fill:#4ea6e6">Allgemein</text>
<text class="d" x="1423" y="514">Ebenen</text>

<rect class="gb" x="1059" y="553" width="676" height="110"/>
<rect x="1070" y="545" width="56" height="16" fill="#545454"/>
<text class="d" x="1076" y="558">Seiten</text>
<circle cx="1081" cy="579" r="8" fill="#d0d0d0"/><circle cx="1081" cy="579" r="2.6" fill="#545454"/>
<text class="d" x="1097" y="584">Seitenvorschau</text>
<circle cx="1081" cy="606" r="7.5" fill="none" stroke="#cfcfcf" stroke-width="1.3"/>
<text class="d" x="1097" y="611">Alle</text>
<circle cx="1081" cy="632" r="7.5" fill="none" stroke="#cfcfcf" stroke-width="1.3"/>
<text class="d" x="1097" y="637">Bereich:</text>
<rect x="1164" y="619" width="98" height="25" rx="2" fill="#5b5b5b"/>
<text x="1168" y="637" style="font-size:14px;fill:#8e8e8e">1-5</text>

<rect class="gb" x="1059" y="690" width="676" height="83"/>
<rect x="1070" y="682" width="78" height="16" fill="#545454"/>
<text class="d" x="1076" y="695">Optionen</text>
<text class="d" x="1165" y="721">Beschneiden auf:</text>
<rect x="1295.5" y="703.5" width="328" height="24.5" rx="2" fill="#404040" stroke="#6a6a6a"/>
<text class="d" x="1300" y="721">Bounding Box (nur sichtbare Ebenen)</text>
<use href="#chev" x="1612" y="716"/>
<rect x="1073" y="740" width="15" height="16" rx="2" fill="#cfcfcf"/><path d="M1076 748L1079.5 752L1085 744" fill="none" stroke="#444" stroke-width="1.8"/>
<text class="d" x="1096" y="753">Transparenter Hintergrund</text>

<rect x="798" y="877" width="15" height="15" rx="2" fill="#cfcfcf"/><path d="M801 884.5L804.5 888L810 881" fill="none" stroke="#444" stroke-width="1.8"/>
<text class="d" x="820" y="889">Vorschau anzeigen</text>

<rect x="1504.5" y="872.5" width="111" height="30.5" rx="15" fill="#4c4c4c" stroke="#dadada" stroke-width="1.4"/>
<text class="d" x="1560" y="893" text-anchor="middle">Abbrechen</text>
<rect x="1630" y="873" width="110" height="30" rx="15" fill="#535353" stroke="#efefef" stroke-width="2.6"/>
<text class="d" x="1685" y="893" text-anchor="middle">OK</text>

<!-- annotation -->
<circle cx="680.5" cy="741" r="45" fill="#e2001a"/>
<text x="679" y="759" text-anchor="middle" style="font-family:'DejaVu Serif','Liberation Serif',serif;font-size:49px;letter-spacing:-4.5px;fill:#fff;stroke:#fff;stroke-width:.9">13</text>
<path d="M749 732H770V722L808 743L770 763V753H749Z" fill="#e2001a"/>
</svg>
</body></html>
